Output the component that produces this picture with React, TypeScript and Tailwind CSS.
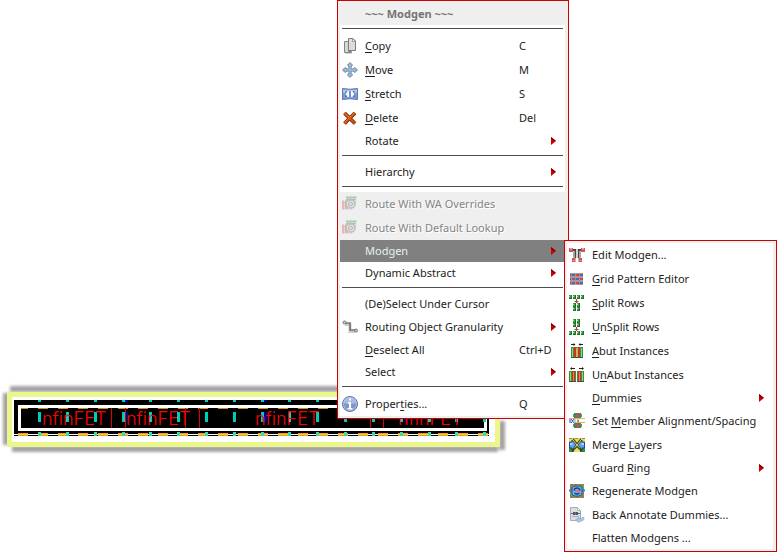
import type { ReactNode } from "react";

type Item = {
  label?: string;
  /** index of the mnemonic letter */
  key?: number;
  shortcut?: string;
  icon?: ReactNode;
  submenu?: boolean;
  active?: boolean;
  disabled?: boolean;
  title?: boolean;
  separator?: boolean;
};

function Icon({ children }: { children: ReactNode }) {
  return (
    <svg className="block size-4" viewBox="0 0 16 16" aria-hidden="true">
      {children}
    </svg>
  );
}

const CopyIcon = (
  <Icon>
    <path d="M2.500 3.500h4v10h3v1h-7z" fill="#d6d6d6" stroke="#858585" />
    <path d="M6.500 0.500h4.500l2.500 2.500v9.500h-7z" fill="#dcdcda" stroke="#7b7b7b" />
    <path d="M10.500 0.500v3h3z" fill="#fff" stroke="#8a8a8a" strokeWidth="0.800" />
    <path d="M3 15.500h7" stroke="#d8d8d8" />
  </Icon>
);

const MoveIcon = (
  <Icon>
    <path d="M8 2v12M2 8h12" stroke="#5f7f9e" strokeWidth="3" />
    <path d="M8 0.500l2.500 2.500-1 1.500h-3l-1-1.500zM8 15.500l2.500-2.500-1-1.500h-3l-1 1.500zM0.500 8l2.500-2.500 1.500 1v3l-1.500 1zM15.500 8l-2.500-2.500-1.500 1v3l1.500 1z" fill="#9db5cb" stroke="#5b7d9f" strokeWidth="0.800" />
    <path d="M8 3v10M3 8h10" stroke="#a9c0d5" strokeWidth="1.400" />
  </Icon>
);

const StretchIcon = (
  <Icon>
    <path d="M0.500 2.500q7.500 1.500 15 0v11q-7.500-1.500-15 0z" fill="#7f9cd2" stroke="#5b79b5" />
    <path d="M1 3.500q7 1.200 14 0v3q-7 1-14 0z" fill="#b4c7ea" />
    <path d="M3.500 5h9v6h-9z" fill="#4a6cad" />
    <path d="M7 5v6H5.500L3.500 8l2-3zM9 5v6h1.500l2-3-2-3z" fill="#f4f8ff" />
    <path d="M7.500 5h1v6h-1z" fill="#9fb7e2" />
  </Icon>
);

const DeleteIcon = (
  <Icon>
    <path d="M2.500 3l10.500 10.500M13 3L2.500 13.500" stroke="#6d2500" strokeWidth="3.800" />
    <path d="M2.500 3l10.500 10.500M13 3L2.500 13.500" stroke="#d2540f" strokeWidth="2.200" />
    <path d="M2.500 2.500l5 5M12.500 2.500L2.500 12.500" stroke="#f6a15c" strokeWidth="0.800" strokeDasharray="1.500 1" />
  </Icon>
);

const RouteIcon = (
  <Icon>
    <path d="M4 0.500h10.500v2H4zM4 3h10v1.500H4z" fill="#a9cba9" />
    <path d="M11.500 4.500h2v3h-2z" fill="#bcd6bc" />
    <path d="M0 4.500h2.500v9H0zM3 4.500h2v9H3z" fill="#e8b5b5" />
    <circle cx="8.500" cy="8" r="4.800" fill="#c4c4c4" />
    <circle cx="8.500" cy="8" r="5" fill="none" stroke="#b0b0b0" strokeDasharray="1.600 1.540" />
    <circle cx="8.500" cy="8" r="3.300" fill="#ececec" />
    <circle cx="8.500" cy="8" r="2" fill="#e2e2e2" stroke="#a9a9a9" strokeWidth="0.900" />
    <path d="M4.500 13l4-4.500" stroke="#c9c9c9" strokeWidth="1.500" />
  </Icon>
);

const RoutingIcon = (
  <Icon>
    <path d="M3 5.500h5v7h5" fill="none" stroke="#ccc" strokeWidth="3" />
    <path d="M4 4h4v7h5" fill="none" stroke="#777" strokeWidth="1.700" />
    <circle cx="2.500" cy="3.500" r="1.500" fill="#ccc" stroke="#666" strokeWidth="0.900" />
    <circle cx="14" cy="11.500" r="1.500" fill="#ccc" stroke="#666" strokeWidth="0.900" />
  </Icon>
);

const InfoIcon = (
  <Icon>
    <circle cx="8" cy="8" r="7.500" fill="#8097ca" stroke="#5c71a8" />
    <path d="M1.500 7a6.500 6 0 0113 0q-6.500 2-13 0z" fill="#a9b9df" />
    <circle cx="8" cy="8" r="6.500" fill="none" stroke="#c1cdea" strokeWidth="0.700" />
    <path d="M7 2.500h2v2H7zM6 6h3v6h1.500v1.500h-5V12H7V7.500H6z" fill="#fff" />
  </Icon>
);

const EditIcon = (
  <Icon>
    <path d="M3 2h4.500v9H5.500V4H3zM13 2H8.500v9h2V4H13z" fill="#4a4444" />
    <path d="M7.500 1h1v11h-1z" fill="#fff" />
    <path d="M4 4.500h1v6H4zM11 4.500h1v6h-1z" fill="#aaa3a3" />
    <path d="M0 1h4v4H0zM12 1h4v4h-4zM3 11h3.500v4H3zM9.500 11H13v4H9.500z" fill="#d0525a" />
    <path d="M1 1h2v1.500H1zM13 1h2v1.500h-2zM4 13h1.500v1H4zM10.500 13H12v1h-1.500z" fill="#f0a6a6" />
  </Icon>
);

const GridIcon = (
  <Icon>
    <path d="M1 2h13v12H1z" fill="#d9c9ca" />
    {[2, 6, 10].map((y, row) => (
      <g key={y}>
        <path d={`M1 ${y}.5h13v3H1z`} fill="#75646c" />
        {[2, 6, 10].map((x, col) => (
          <g key={x}>
            <path d={`M${x} ${y + 1}h3v2h-3z`} fill={(row + col) % 2 === 0 ? "#3c6bd4" : "#e04040"} />
            <path d={`M${x} ${y + 1}h1v2h-1z`} fill={(row + col) % 2 === 0 ? "#e66a6a" : "#7ba0ea"} />
          </g>
        ))}
      </g>
    ))}
  </Icon>
);

function Cells({ y, xs, h = 4 }: { y: number; xs: number[]; h?: number }) {
  return (
    <>
      {xs.map((x) => (
        <g key={x}>
          <path d={`M${x} ${y}h3v${h}h-3z`} fill="#3fa53f" />
          <path d={`M${x} ${y + 1}h1v1h-1z`} fill="#a5e097" />
          <path d={`M${x + 2} ${y}h1v${h}h-1zM${x} ${y + h - 1}h3v1h-3z`} fill="#1f6f2c" />
        </g>
      ))}
    </>
  );
}

const SplitIcon = (
  <Icon>
    <Cells y={0} xs={[0, 4, 8, 12]} />
    <path d="M7.500 4v4M5.500 6.500h4" stroke="#c92c62" strokeWidth="1.200" />
    <Cells y={8} xs={[4, 8]} />
    <Cells y={12} xs={[4, 8]} />
  </Icon>
);

const UnsplitIcon = (
  <Icon>
    <Cells y={0} xs={[4, 8]} />
    <Cells y={4} xs={[4, 8]} />
    <path d="M7.500 8v4M5.500 10.500h4" stroke="#c92c62" strokeWidth="1.200" />
    <Cells y={12} xs={[0, 4, 8, 12]} />
  </Icon>
);

const AbutIcon = (
  <Icon>
    <path d="M2 1.500h4M10 1.500h4" stroke="#222" />
    <path d="M4.500 0l2 1.500-2 1.500zM11.500 0l-2 1.500 2 1.500z" fill="#222" />
    <path d="M2 4h12v11H2z" fill="#36963d" />
    <path d="M3 5h1v9H3zM12 5h1v9h-1z" fill="#92d568" />
    <path d="M5 4h2v11H5zM9 4h2v11H9z" fill="#d12f24" />
    <path d="M7 5h2v9H7z" fill="#c9b070" />
    <path d="M2 14.500h12" stroke="#315c30" />
  </Icon>
);

const UnabutIcon = (
  <Icon>
    <path d="M2 1.500h4M10 1.500h4" stroke="#222" />
    <path d="M3 0L1 1.500 3 3zM13 0l2 1.500L13 3z" fill="#222" />
    <path d="M0 4h7v11H0zM8 4h7v11H8z" fill="#36963d" />
    <path d="M1 5h1v9H1zM13 5h1v9h-1z" fill="#92d568" />
    <path d="M3 4h3v11H3zM9 4h3v11H9z" fill="#d12f24" />
    <path d="M4 5h1v9H4zM10 5h1v9h-1z" fill="#ef7d5c" />
    <path d="M0 14.500h7M8 14.500h7" stroke="#315c30" />
  </Icon>
);

const AlignIcon = (
  <Icon>
    <path d="M5 0h7v5H5zM5 10h7v5H5z" fill="#3c8f47" />
    <path d="M7 1h3v3H7zM7 11h3v3H7z" fill="#d8406e" />
    <path d="M4 1h1v3H4zM4 11h1v3H4zM12 1h1v3h-1zM12 11h1v3h-1z" fill="#7c858c" />
    <path d="M0 5.500h16M6 9.500h10" stroke="#f6a860" />
    <path d="M0 6h2v4H0zM5.500 6h1v4h-1z" fill="#8ea0e8" />
    <path d="M2 6l3 4M5 6l-3 4" stroke="#3c55cc" />
    <path d="M8 6.500h2v2.500H8z" fill="#7aa57d" />
  </Icon>
);

const MergeIcon = (
  <Icon>
    <path d="M0 1h16v14H0z" fill="#eadf62" />
    <path d="M0 11h5v4H0zM11 11h5v4h-5z" fill="#3c8a3a" />
    <path d="M4 1.500l4 5 4-5M3 14.500l5-5 5 5" fill="none" stroke="#3c3c1c" strokeWidth="1.200" />
    <path d="M0.500 5H3V3l4 5-4 5v-2H0.500zM15.500 5H13V3L9 8l4 5v-2h2.500z" fill="#5aa5f2" stroke="#1d3a72" strokeWidth="0.900" />
    <path d="M1 6h2.500v2H1zM12.500 6H15v2h-2.500z" fill="#a9d3ff" />
    <path d="M0 1h3v1H0zM6 1h3v1H6zM13 1h3v1h-3z" fill="#9a9132" />
  </Icon>
);

const RegenerateIcon = (
  <Icon>
    <path d="M1 1h14v14H1z" fill="#5ba55b" />
    <path d="M2 1h2v2H2zM6 1h2v2H6zM11 1h2v2h-2zM2 13h2v2H2zM7 13h2v2H7zM12 13h2v2h-2zM1 4h2v2H1zM13 10h2v2h-2z" fill="#cf5a4a" />
    <path d="M0 7.500h3M13 7.500h3" stroke="#4875bd" strokeWidth="2" />
    <rect x="3" y="3" width="10" height="10" rx="3" fill="#6fb0f2" stroke="#2c5796" />
    <path d="M5 7.500Q5.500 5 8 5t3 2.500M5.500 10q2.500 2 5 0" fill="none" stroke="#1f4480" strokeWidth="1.400" />
    <path d="M6 7h4v2H6z" fill="#e9706a" />
  </Icon>
);

const AnnotateIcon = (
  <Icon>
    <path d="M1.500 0.500h7l3 3v10h-10z" fill="#dcdfe2" stroke="#a8abaf" />
    <path d="M8.500 0.500v3h3z" fill="#fff" stroke="#b6b9bc" />
    <path d="M1.500 6.500h10" stroke="#4a72ac" />
    <path d="M4 5h5v3H4z" fill="#4b5671" />
    <path d="M6 5h1v3H6z" fill="#ce5555" />
    <path d="M3 9.500h7" stroke="#a7aeb8" />
    <path d="M15 10.500q.5 4-5 4v1L6.500 13l3.500-2.500V12q3 .5 3-1.500z" fill="#b3cae8" stroke="#7c9ac4" strokeWidth="0.600" />
  </Icon>
);

const mainItems: Item[] = [
  { label: "~~~ Modgen ~~~", title: true },
  { separator: true },
  { label: "Copy", key: 0, shortcut: "C", icon: CopyIcon },
  { label: "Move", key: 0, shortcut: "M", icon: MoveIcon },
  { label: "Stretch", key: 0, shortcut: "S", icon: StretchIcon },
  { label: "Delete", key: 0, shortcut: "Del", icon: DeleteIcon },
  { label: "Rotate", submenu: true },
  { separator: true },
  { label: "Hierarchy", submenu: true },
  { separator: true },
  { label: "Route With WA Overrides", icon: RouteIcon, disabled: true },
  { label: "Route With Default Lookup", icon: RouteIcon, disabled: true },
  { label: "Modgen", submenu: true, active: true },
  { label: "Dynamic Abstract", submenu: true },
  { separator: true },
  { label: "(De)Select Under Cursor" },
  { label: "Routing Object Granularity", submenu: true, icon: RoutingIcon },
  { label: "Deselect All", key: 0, shortcut: "Ctrl+D" },
  { label: "Select", submenu: true },
  { separator: true },
  { label: "Properties...", key: 6, shortcut: "Q", icon: InfoIcon },
];

const modgenItems: Item[] = [
  { label: "Edit Modgen...", icon: EditIcon },
  { label: "Grid Pattern Editor", key: 0, icon: GridIcon },
  { label: "Split Rows", key: 0, icon: SplitIcon },
  { label: "UnSplit Rows", key: 0, icon: UnsplitIcon },
  { label: "Abut Instances", key: 0, icon: AbutIcon },
  { label: "UnAbut Instances", key: 1, icon: UnabutIcon },
  { label: "Dummies", key: 0, submenu: true },
  { label: "Set Member Alignment/Spacing", key: 4, icon: AlignIcon },
  { label: "Merge Layers", key: 6, icon: MergeIcon },
  { label: "Guard Ring", key: 6, submenu: true },
  { label: "Regenerate Modgen", icon: RegenerateIcon },
  { label: "Back Annotate Dummies...", icon: AnnotateIcon },
  { label: "Flatten Modgens ..." },
];

function Label({ text, mnemonic }: { text: string; mnemonic?: number }) {
  if (mnemonic === undefined) return <>{text}</>;
  return (
    <>
      {text.slice(0, mnemonic)}
      <span className="underline decoration-1 underline-offset-2 [text-decoration-skip-ink:none]">
        {text[mnemonic]}
      </span>
      {text.slice(mnemonic + 1)}
    </>
  );
}

function MenuRow({ item }: { item: Item }) {
  if (item.separator) {
    return <hr className="mx-[2px] mt-[3px] mb-[5px] h-px border-0 bg-[#4c4c4c]" />;
  }
  const height = item.icon ? "h-6" : "h-[22px]";
  const tone = item.title
    ? "bg-[#efefef] font-bold text-[#757575]"
    : item.disabled
      ? "bg-[#efefef] text-[#858585] [text-shadow:1px_1px_0_#fff]"
      : item.active
        ? "bg-[#808080] text-[#e4f0f0]"
        : "bg-white text-[#1c1c1c]";
  return (
    <button
      type="button"
      role="menuitem"
      disabled={item.disabled || item.title}
      className={`flex w-full items-center pl-[2px] text-left whitespace-pre ${height} ${tone}`}
    >
      <span className="mr-[7px] w-4 shrink-0">{item.icon}</span>
      <span className="grow">
        <Label text={item.label ?? ""} mnemonic={item.key} />
      </span>
      {item.shortcut && <span className="w-[46px] shrink-0">{item.shortcut}</span>}
      {item.submenu && (
        <svg className="mr-[9px] h-2 w-[5px] shrink-0" viewBox="0 0 5 8" aria-hidden="true">
          <path d="M0 0l5 4-5 4z" fill="#cc0000" />
          <path d="M0 0l5 4H3L0 2z" fill="#7d0000" />
        </svg>
      )}
    </button>
  );
}

function Menu({ items, name, className }: { items: Item[]; name: string; className: string }) {
  return (
    <div
      role="menu"
      aria-label={name}
      className={`absolute border border-[#cc0000] bg-[#efefef] py-[2px] pr-[3px] pl-[2px] ${className}`}
    >
      <div className="bg-white">
        {items.map((item, i) => (
          <MenuRow key={i} item={item} />
        ))}
      </div>
    </div>
  );
}

const contacts = [38, 66, 94, 122, 149, 177, 205, 233, 261, 288, 316, 344, 372, 400, 428, 455, 483];
const dashes = Array.from({ length: 24 }, (_, i) => 18 + i * 20);

function Layout() {
  return (
    <svg
      className="absolute top-[380px] left-0 h-20 w-[520px]"
      viewBox="0 380 520 80"
      role="img"
      aria-label="Modgen layout"
    >
      <defs>
        <filter id="soft" x="-5%" y="-30%" width="110%" height="160%">
          <feGaussianBlur stdDeviation="1.600" />
        </filter>
      </defs>
      <g filter="url(#soft)" fill="#a2a2a2">
        <path d="M10 386h482v6H10zM3 393h6v52H3zM12 446h486v6H12zM499 421h6v29h-6z" />
      </g>
      <g shapeRendering="crispEdges">
        <path d="M7 392h490l3 28v27H7z" fill="#ecf78b" />
        <path d="M12 397h483v45H12z" fill="#fff" />
        <path d="M14 400h475v36H14z" fill="#000" />
        <path d="M18 405h469v26H18z" fill="#fff" />
        <path d="M21 408h463v20H21z" fill="#000" />
        <path d="M14 434h475v1H14z" fill="#fff" />
        {dashes.map((x) => (
          <g key={x}>
            <path d={`M${Math.max(x, 21)} 408H${Math.min(x + 10, 484)}v1H${Math.max(x, 21)}z`} fill="#d99000" />
            <path d={`M${x} 433h10v3h-10z`} fill="#f0a010" />
            <path d={`M${x} 434h10v1h-10z`} fill="#ffc34d" />
          </g>
        ))}
        {[125, 264, 404].map((x) => (
          <path key={x} d={`M${x} 400h3v2h-3zM${x} 412h3v10h-3zM${x} 432h3v1h-3z`} fill="#0000a8" />
        ))}
        {contacts.map((x) => (
          <g key={x} fill="#00cdb7">
            <path d={`M${x} 400h3v2h-3zM${x} 412h3v10h-3z`} />
            <path d={`M${x} 432h3v4h-3z`} fill="#35dba8" />
          </g>
        ))}
        <path d="M111 408h1v20h-1zM125 408h1v20h-1zM185 408h1v20h-1zM199 408h1v20h-1zM370 408h1v20h-1zM383 408h1v20h-1z" fill="#e00000" />
      </g>
      <g className="font-['Inter',sans-serif] text-[18px] font-light" fill="#ff0000">
        {[42, 126, 255, 398].map((x) => (
          <text key={x} x={x} y="425">
            nfinFET
          </text>
        ))}
      </g>
    </svg>
  );
}

export default function App() {
  return (
    <main className="relative min-h-screen overflow-hidden bg-white font-['Noto_Sans','Open_Sans',sans-serif] text-[11px] leading-4">
      <Layout />
      <Menu items={mainItems} name="Context" className="top-0 left-[337px] w-[232px]" />
      <Menu items={modgenItems} name="Modgen" className="top-[240px] left-[564px] w-[213px]" />
    </main>
  );
}
